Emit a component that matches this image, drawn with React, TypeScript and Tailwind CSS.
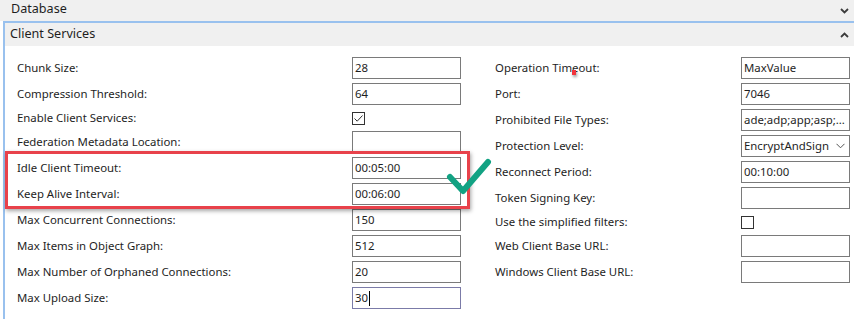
import React from "react";

type Row =
  | { label: string; kind: "input"; value?: string; focused?: boolean }
  | { label: string; kind: "check"; checked?: boolean }
  | { label: string; kind: "select"; value: string };

const leftRows: Row[] = [
  { label: "Chunk Size:", kind: "input", value: "28" },
  { label: "Compression Threshold:", kind: "input", value: "64" },
  { label: "Enable Client Services:", kind: "check", checked: true },
  { label: "Federation Metadata Location:", kind: "input", value: "" },
  { label: "Idle Client Timeout:", kind: "input", value: "00:05:00" },
  { label: "Keep Alive Interval:", kind: "input", value: "00:06:00" },
  { label: "Max Concurrent Connections:", kind: "input", value: "150" },
  { label: "Max Items in Object Graph:", kind: "input", value: "512" },
  { label: "Max Number of Orphaned Connections:", kind: "input", value: "20" },
  { label: "Max Upload Size:", kind: "input", value: "30", focused: true },
];

const rightRows: Row[] = [
  { label: "Operation Timeout:", kind: "input", value: "MaxValue" },
  { label: "Port:", kind: "input", value: "7046" },
  { label: "Prohibited File Types:", kind: "input", value: "ade;adp;app;asp;..." },
  { label: "Protection Level:", kind: "select", value: "EncryptAndSign" },
  { label: "Reconnect Period:", kind: "input", value: "00:10:00" },
  { label: "Token Signing Key:", kind: "input", value: "" },
  { label: "Use the simplified filters:", kind: "check", checked: false },
  { label: "Web Client Base URL:", kind: "input", value: "" },
  { label: "Windows Client Base URL:", kind: "input", value: "" },
];

const Chevron = ({ up }: { up?: boolean }) => (
  <svg width="9" height="6" viewBox="0 0 9 6" className="mr-[5px]">
    <path
      d={up ? "M1 5 L4.5 1.5 L8 5" : "M1 1 L4.5 4.5 L8 1"}
      fill="none"
      stroke="#3c3c3c"
      strokeWidth="1.8"
    />
  </svg>
);

const Field = ({ row }: { row: Row }) => {
  if (row.kind === "check") {
    return (
      <div className="w-[13px] h-[13px] border border-[#333] bg-white flex items-center justify-center">
        {row.checked && (
          <svg width="11" height="11" viewBox="0 0 11 11">
            <path d="M1.5 5.5 L4.2 8.2 L9.5 2.5" fill="none" stroke="#333" strokeWidth="1" />
          </svg>
        )}
      </div>
    );
  }
  if (row.kind === "select") {
    return (
      <div className="w-[109px] h-[22px] border border-[#7a7a7a] bg-white flex items-center justify-between pl-[2px] pr-[4px] whitespace-nowrap">
        <span>{row.value}</span>
        <svg width="9" height="6" viewBox="0 0 9 6" className="shrink-0">
          <path d="M0.5 0.8 L4.5 4.8 L8.5 0.8" fill="none" stroke="#555" strokeWidth="1" />
        </svg>
      </div>
    );
  }
  return (
    <div
      className={`w-[109px] h-[22px] border bg-white flex items-center pl-[2px] overflow-hidden whitespace-nowrap ${
        row.focused ? "border-[#7b7ba8]" : "border-[#7a7a7a]"
      }`}
    >
      <span>{row.value}</span>
      {row.focused && <span className="w-px h-[15px] bg-black ml-px" />}
    </div>
  );
};

const Column = ({ rows, labelWidth }: { rows: Row[]; labelWidth: string }) => (
  <div className="flex flex-col gap-[4px]">
    {rows.map((row) => (
      <div key={row.label} className={`flex items-center ${row.kind === "check" ? "h-[18px]" : "h-[22px]"}`}>
        <div className={`${labelWidth} shrink-0 whitespace-nowrap`}>{row.label}</div>
        <Field row={row} />
      </div>
    ))}
  </div>
);

export default function App() {
  return (
    <div
      className="relative w-[854px] h-[319px] bg-white overflow-hidden text-[11.4px] text-[#1e1e1e]"
      style={{ fontFamily: '"Noto Sans", "Open Sans", sans-serif' }}
    >
      <div className="h-[21px] bg-[#f0f0f0] flex items-center justify-between pl-[11px] text-[12.6px]">
        <span className="-mt-[3px]">Database</span>
        <Chevron />
      </div>
      <div className="h-[298px] border-l-2 border-t-2 border-[#99c1ee] ml-[3px]">
        <div className="h-[23px] bg-[#f0f0f0] flex items-center justify-between pl-[5px] text-[12.6px]">
          <span>Client Services</span>
          <Chevron up />
        </div>
        <div className="flex pt-[11px] pl-[12px]">
          <Column rows={leftRows} labelWidth="w-[335px]" />
          <div className="ml-[34px]">
            <Column rows={rightRows} labelWidth="w-[246px]" />
          </div>
        </div>
      </div>

      {/* annotation overlay */}
      <div className="absolute left-[5px] top-[151px] w-[465px] h-[58px] border-[3px] border-[#e8424b] shadow-[1px_2px_4px_rgba(0,0,0,0.35)]" />
      <svg className="absolute left-[444px] top-[156px]" width="50" height="42" viewBox="0 0 50 42">
        <path
          d="M6 21 L19 35 L44 6"
          fill="none"
          stroke="#12a283"
          strokeWidth="6"
          strokeLinecap="round"
          strokeLinejoin="round"
        />
      </svg>
      <div className="absolute left-[572px] top-[70px] w-[4px] h-[5px] bg-[#f2333b] shadow-[1px_2px_3px_rgba(0,0,0,0.4)]" />
    </div>
  );
}
